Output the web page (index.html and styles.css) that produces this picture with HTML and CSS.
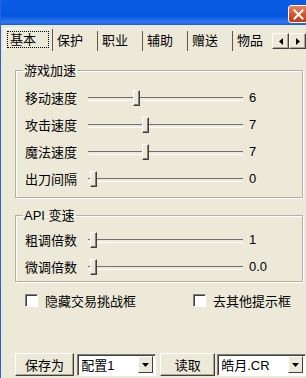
FILE: index.html
```html
<!DOCTYPE html>
<html lang="zh-CN">
<head>
    <meta charset="UTF-8">
    <meta name="viewport" content="width=device-width, initial-scale=1.0">
    <title>加速设置</title>
    <link rel="stylesheet" href="styles.css">
</head>
<body>
    <div class="window">
        <div class="titlebar">
            <span class="close-btn">
                <svg width="11" height="11" viewBox="0 0 11 11"><path d="M1.5 1.5 L9.5 9.5 M9.5 1.5 L1.5 9.5" stroke="#fff" stroke-width="2" stroke-linecap="square"/></svg>
            </span>
        </div>

        <div class="tabs">
            <div class="tab active"><span class="focus">基本</span></div>
            <div class="tab">保护</div>
            <div class="tab">职业</div>
            <div class="tab">辅助</div>
            <div class="tab">赠送</div>
            <div class="tab last">物品</div>
            <div class="tab-arrows">
                <span class="arrow-btn"><svg width="4" height="7" viewBox="0 0 4 7"><polygon points="4,0 4,7 0,3.5" fill="#000"/></svg></span>
                <span class="arrow-btn"><svg width="4" height="7" viewBox="0 0 4 7"><polygon points="0,0 0,7 4,3.5" fill="#000"/></svg></span>
            </div>
        </div>

        <div class="page">
            <fieldset class="group group-speed">
                <legend>游戏加速</legend>
                <div class="row">
                    <span class="label">移动速度</span>
                    <div class="slider"><span class="thumb" style="left: 45px"></span></div>
                    <span class="value">6</span>
                </div>
                <div class="row">
                    <span class="label">攻击速度</span>
                    <div class="slider"><span class="thumb" style="left: 54px"></span></div>
                    <span class="value">7</span>
                </div>
                <div class="row">
                    <span class="label">魔法速度</span>
                    <div class="slider"><span class="thumb" style="left: 54px"></span></div>
                    <span class="value">7</span>
                </div>
                <div class="row">
                    <span class="label">出刀间隔</span>
                    <div class="slider"><span class="thumb" style="left: 2px"></span></div>
                    <span class="value">0</span>
                </div>
            </fieldset>

            <fieldset class="group group-api">
                <legend>API 变速</legend>
                <div class="row">
                    <span class="label">粗调倍数</span>
                    <div class="slider"><span class="thumb" style="left: 2px"></span></div>
                    <span class="value">1</span>
                </div>
                <div class="row">
                    <span class="label">微调倍数</span>
                    <div class="slider"><span class="thumb" style="left: 2px"></span></div>
                    <span class="value">0.0</span>
                </div>
            </fieldset>

            <div class="checks">
                <label class="check check-left"><span class="box"></span>隐藏交易挑战框</label>
                <label class="check"><span class="box"></span>去其他提示框</label>
            </div>

            <div class="actions">
                <span class="btn btn-save">保存为</span>
                <span class="combo combo-profile">
                    <span class="combo-text">配置1</span>
                    <span class="drop"><svg width="7" height="4" viewBox="0 0 7 4"><polygon points="0,0 7,0 3.5,4" fill="#000"/></svg></span>
                </span>
                <span class="btn btn-load">读取</span>
                <span class="combo combo-server">
                    <span class="combo-text">皓月.CR</span>
                    <span class="drop"><svg width="7" height="4" viewBox="0 0 7 4"><polygon points="0,0 7,0 3.5,4" fill="#000"/></svg></span>
                </span>
            </div>
        </div>
    </div>
</body>
</html>
```

FILE: styles.css
```css
* {
    box-sizing: border-box;
}

body {
    margin: 0;
    background: #ece9d8;
    font-family: "Liberation Sans", "Noto Sans CJK SC", sans-serif;
    font-size: 13px;
    color: #000;
}

.window {
    width: 306px;
    height: 378px;
    overflow: hidden;
    background: #ece9d8;
    border-left: 1px solid #2a62d8;
}

/* Title bar */
.titlebar {
    height: 25px;
    background: linear-gradient(to bottom, #0a5ce4 0%, #0757e0 65%, #2c78f2 88%, #1a5bd6 100%);
    display: flex;
    justify-content: flex-end;
    padding-top: 5px;
}

.close-btn {
    width: 21px;
    height: 18px;
    margin-right: -3px;
    border: 1px solid #fff;
    border-radius: 3px;
    background: linear-gradient(to bottom, #e8825c, #d2481f 70%, #c23a12);
    display: flex;
    align-items: center;
    justify-content: center;
}

/* Tabs */
.tabs {
    display: flex;
    align-items: flex-end;
    height: 23px;
    margin-top: 3px;
    padding-left: 3px;
}

.tab {
    width: 45px;
    height: 20px;
    line-height: 19px;
    padding-left: 4px;
    border-right: 1px solid #5c5a50;
    white-space: nowrap;
}

.tab.active {
    width: 49px;
    height: 23px;
    padding: 2px 0 0 2px;
    border-top: 1px solid #fff;
    border-left: 1px solid #fff;
    border-radius: 2px 2px 0 0;
}

.tab.active .focus {
    display: block;
    width: 42px;
    height: 17px;
    line-height: 15px;
    padding-left: 2px;
    border: 1px dotted #000;
}

.tab.last {
    flex: 1;
    border-right: none;
}

.tab-arrows {
    display: flex;
    margin-bottom: 2px;
}

.arrow-btn {
    width: 17px;
    height: 16px;
    display: flex;
    align-items: center;
    justify-content: center;
    background: #ece9d8;
    border-top: 1px solid #fff;
    border-left: 1px solid #fff;
    border-right: 1px solid #404040;
    border-bottom: 1px solid #404040;
    box-shadow: inset -1px -1px 0 #aca899;
}

/* Page content */
.page {
    padding-left: 14px;
}

.group {
    margin: 0;
    padding: 0;
    width: 288px;
    min-width: 0;
    border: 1px solid #b4b1a2;
    box-shadow: inset 1px 1px 0 #fff, 1px 1px 0 #fff;
}

.group legend {
    margin-left: 7px;
    padding: 0 1px;
    line-height: 15px;
}

.group-speed {
    margin-top: 12px;
    padding: 6px 0 5px;
}

.group-api {
    margin-top: 10px;
    padding: 3px 0 1px;
}

.row {
    display: flex;
    align-items: center;
    height: 27px;
    padding-left: 9px;
}

.label {
    width: 63px;
    white-space: nowrap;
}

.slider {
    position: relative;
    width: 155px;
    height: 16px;
}

.slider::before {
    content: "";
    position: absolute;
    left: 0;
    right: 0;
    top: 7px;
    height: 2px;
    border-top: 1px solid #707070;
    border-bottom: 1px solid #fff;
}

.thumb {
    position: absolute;
    top: 0;
    width: 7px;
    height: 16px;
    background: #ece9d8;
    border-top: 1px solid #fff;
    border-left: 1px solid #fff;
    border-right: 1px solid #404040;
    border-bottom: 1px solid #404040;
    box-shadow: inset -1px -1px 0 #808080;
}

.value {
    margin-left: 6px;
}

/* Checkboxes */
.checks {
    display: flex;
    align-items: center;
    height: 16px;
    margin-top: 10px;
    padding-left: 10px;
}

.check {
    display: flex;
    align-items: center;
    white-space: nowrap;
}

.check-left {
    width: 168px;
}

.box {
    width: 13px;
    height: 13px;
    margin-right: 7px;
    background: #fff;
    border-top: 1px solid #808080;
    border-left: 1px solid #808080;
    border-right: 1px solid #fff;
    border-bottom: 1px solid #fff;
    box-shadow: inset 1px 1px 0 #404040;
}

/* Bottom actions */
.actions {
    display: flex;
    align-items: center;
    height: 23px;
    margin-top: 45px;
}

.btn {
    height: 23px;
    display: flex;
    align-items: center;
    justify-content: center;
    background: #ece9d8;
    border-top: 1px solid #fff;
    border-left: 1px solid #fff;
    border-right: 1px solid #404040;
    border-bottom: 1px solid #404040;
    box-shadow: inset -1px -1px 0 #aca899;
}

.btn-save {
    width: 60px;
}

.btn-load {
    width: 56px;
    margin-left: 4px;
}

.combo {
    display: flex;
    align-items: center;
    height: 22px;
    background: #fff;
    border-top: 1px solid #808080;
    border-left: 1px solid #808080;
    border-right: 1px solid #fff;
    border-bottom: 1px solid #fff;
    box-shadow: inset 1px 1px 0 #404040;
    padding: 2px 2px 2px 3px;
}

.combo-profile {
    width: 80px;
    margin-left: 3px;
}

.combo-server {
    width: 90px;
    margin-left: 2px;
}

.combo-text {
    flex: 1;
    white-space: nowrap;
}

.drop {
    width: 15px;
    height: 17px;
    display: flex;
    align-items: center;
    justify-content: center;
    background: #ece9d8;
    border-top: 1px solid #fff;
    border-left: 1px solid #fff;
    border-right: 1px solid #404040;
    border-bottom: 1px solid #404040;
}
```
